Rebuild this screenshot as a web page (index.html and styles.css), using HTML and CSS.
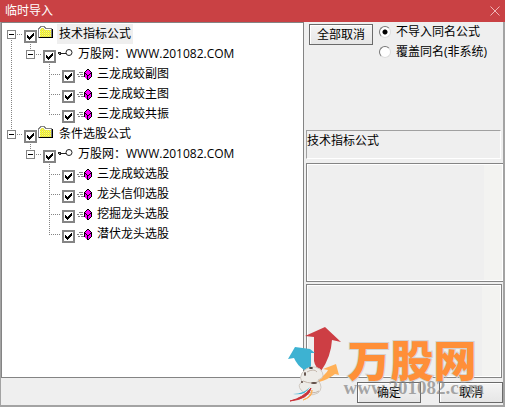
FILE: index.html
```html
<!DOCTYPE html>
<html lang="zh-CN">
<head>
<meta charset="utf-8">
<title>临时导入</title>
<link rel="stylesheet" href="styles.css">
</head>
<body>
<svg class="defs" width="0" height="0" aria-hidden="true">
  <defs>
    <pattern id="dither" width="2" height="2" patternUnits="userSpaceOnUse">
      <rect width="2" height="2" fill="#ffff00"/>
      <rect width="1" height="1" fill="#d0d0a0"/><rect x="1" y="1" width="1" height="1" fill="#e8e8a0"/>
    </pattern>
    <symbol id="folder" viewBox="0 0 20 20">
      <path d="M1 14V4h1V3h1V2h5v1h1v1h6v10z" fill="#848484"/>
      <path d="M2 14V5h1V4h1V3h3v1h1v1h6v9z" fill="#fff"/>
      <path d="M3 13V5h1V4h3v1h1v1h6v7z" fill="url(#dither)"/>
      <path d="M2 14h14V5h-1v8H2z" fill="#000"/>
    </symbol>
    <symbol id="key" viewBox="0 0 20 20">
      <path d="M2 8h3v1h6v1H5v1H3v-1H2z" fill="#222"/>
      <rect x="3" y="9" width="1" height="1" fill="#999"/>
      <circle cx="13" cy="8.500" r="3" fill="#fff" stroke="#222"/>
    </symbol>
    <symbol id="gem" viewBox="0 0 20 20">
      <path d="M4 8.500h4M2 10.500h2M5 10.500h3M3 12.500h2M6 12.500h3" stroke="#848484"/>
      <path d="M12 5h2v1h1v1h1v1h1v5h-1v1h-1v1h-1v1h-2v-1h-1v-1h-1v-1H9V8h1V7h1V6h1z" fill="#000"/>
      <path d="M12 6h2v1h1v1h1v1h-1v1h-1v1h-2v-1h-1V9h-1V8h1V7h1zM10 10h1v1h1v4h-1v-1h-1zM13 12h1v-1h1v-1h1v3h-1v1h-1v1h-1z" fill="#ff00ff"/>
    </symbol>
  </defs>
</svg>
<div class="window">
  <header class="titlebar">
    <h1>临时导入</h1>
    <button class="close" type="button" aria-label="关闭"><svg width="10" height="10" viewBox="0 0 10 10"><path d="M.5.5l9 9M9.500.5l-9 9" stroke="#efb6b7" fill="none"/></svg></button>
  </header>
  <main class="content">
    <ul class="tree">
      <li>
        <div class="row"><span class="elbow"><button class="toggle" type="button" aria-label="折叠"></button></span><input type="checkbox" id="a" checked><svg class="icon"><use href="#folder"/></svg><label class="selected" for="a">技术指标公式</label></div>
        <ul>
          <li>
            <div class="row"><span class="elbow"><button class="toggle" type="button" aria-label="折叠"></button></span><input type="checkbox" id="b" checked><svg class="icon"><use href="#key"/></svg><label for="b">万股网：WWW.201082.COM</label></div>
            <ul>
              <li><div class="row"><span class="elbow"></span><input type="checkbox" id="b1" checked><svg class="icon"><use href="#gem"/></svg><label for="b1">三龙成蛟副图</label></div></li>
              <li><div class="row"><span class="elbow"></span><input type="checkbox" id="b2" checked><svg class="icon"><use href="#gem"/></svg><label for="b2">三龙成蛟主图</label></div></li>
              <li><div class="row"><span class="elbow"></span><input type="checkbox" id="b3" checked><svg class="icon"><use href="#gem"/></svg><label for="b3">三龙成蛟共振</label></div></li>
            </ul>
          </li>
        </ul>
      </li>
      <li>
        <div class="row"><span class="elbow"><button class="toggle" type="button" aria-label="折叠"></button></span><input type="checkbox" id="c" checked><svg class="icon"><use href="#folder"/></svg><label for="c">条件选股公式</label></div>
        <ul>
          <li>
            <div class="row"><span class="elbow"><button class="toggle" type="button" aria-label="折叠"></button></span><input type="checkbox" id="d" checked><svg class="icon"><use href="#key"/></svg><label for="d">万股网：WWW.201082.COM</label></div>
            <ul>
              <li><div class="row"><span class="elbow"></span><input type="checkbox" id="d1" checked><svg class="icon"><use href="#gem"/></svg><label for="d1">三龙成蛟选股</label></div></li>
              <li><div class="row"><span class="elbow"></span><input type="checkbox" id="d2" checked><svg class="icon"><use href="#gem"/></svg><label for="d2">龙头信仰选股</label></div></li>
              <li><div class="row"><span class="elbow"></span><input type="checkbox" id="d3" checked><svg class="icon"><use href="#gem"/></svg><label for="d3">挖掘龙头选股</label></div></li>
              <li><div class="row"><span class="elbow"></span><input type="checkbox" id="d4" checked><svg class="icon"><use href="#gem"/></svg><label for="d4">潜伏龙头选股</label></div></li>
            </ul>
          </li>
        </ul>
      </li>
    </ul>
    <section class="side">
      <div class="options">
        <button class="btn" type="button">全部取消</button>
        <div class="radios">
          <label><input type="radio" name="mode" checked>不导入同名公式</label>
          <label><input type="radio" name="mode">覆盖同名(非系统)</label>
        </div>
      </div>
      <div class="caption">技术指标公式</div>
      <div class="pane wide"></div>
      <div class="pane"></div>
    </section>
  </main>
  <footer class="actions">
    <button class="btn" type="button">确定</button>
    <button class="btn" type="button">取消</button>
  </footer>
  <div class="watermark">
    <svg class="logo" width="60" height="76" viewBox="0 0 60 76" aria-hidden="true">
      <path d="M37 0L17 9l9 1v24q1 6 7 10Q43 30 44 13l9 2z" fill="#cb3339" opacity=".94"/>
      <path d="M7 20L0 32l6-1q3 7 10 12l7-3V26h4l-5-4z" fill="#3db2d2"/>
      <path d="M48 37l3 11-4-1q-6 5-16 8l-2-3q9-4 11-9l-5-1z" fill="#ffb057"/>
      <path d="M14 46q8-10 18-4 7 8-2 11 6 8 0 13-10 5-17-3-4-5 1-8-3-4 0-9z" fill="#eeece8" stroke="#d0c9c1"/>
      <path d="M19 45q7-4 10 0M15 54q9 4 17 0M18 63q6 5 13 1" fill="none" stroke="#c3b5a9"/>
      <ellipse cx="17" cy="47" rx="1" ry="2" fill="#5b4942"/><ellipse cx="23" cy="41" rx="2" ry="1" fill="#3c3634"/><circle cx="14" cy="55" r="1" fill="#5b4942"/><ellipse cx="26" cy="56" rx="3" ry="1" fill="#5b4942"/>
      <path d="M5 67q11 0 17-7-5 9-17 7z" fill="#3db2d2"/>
      <path d="M2 74q13-3 21-13-2 11-21 13z" fill="#cb3339" stroke="#cb3339"/>
      <path d="M15 73q8-3 9-10 1 7-9 10z" fill="#ffb057" stroke="#ffb057"/>
    </svg>
    <div class="brand"><strong>万股网</strong><span>www.201082.com</span></div>
  </div>
</div>
</body>
</html>
```
FILE: styles.css
```css
* { box-sizing: border-box; }

body {
  margin: 0;
  background: #efefef;
  color: #000;
  font: 12px/20px "Open Sans", "Noto Sans CJK SC", sans-serif;
}

button, input { margin: 0; padding: 0; font: inherit; color: inherit; }
ul { list-style: none; margin: 0; padding: 0; }
.defs { position: absolute; }

.window {
  position: relative;
  display: flex;
  flex-direction: column;
  min-height: 100vh;
  border-bottom: 2px solid #a3a3a3;
}

.titlebar {
  display: flex;
  align-items: center;
  justify-content: space-between;
  height: 22px;
  padding: 0 5px;
  background: #c94144;
  color: #fff;
}
.titlebar h1 { margin: 0; font-size: 12px; font-weight: 400; }
.close { display: flex; border: 0; background: none; }

.content {
  flex: 1;
  display: grid;
  grid-template-columns: 3fr minmax(199px, 1fr);
  border-left: 1px solid #a3a3a3;
  border-right: 2px solid #a3a3a3;
}

.tree {
  padding: 1px 0 0 3px;
  background: #fff;
  border: 1px solid #848484;
}
.tree ul { padding-left: 19px; }
.tree li {
  background: repeating-linear-gradient(#848484 0 1px, transparent 1px 2px) 6px 0 / 1px 100% no-repeat;
}
.tree li:last-child { background-size: 1px 10px; }
.tree > li:first-child { background-position: 6px 10px; }

.row { display: flex; height: 20px; }
.elbow {
  width: 19px;
  padding: 6px 0 0 2px;
  background: repeating-linear-gradient(90deg, #848484 0 1px, transparent 1px 2px) 6px 10px / 12px 1px no-repeat;
}
.toggle {
  display: block;
  width: 9px;
  height: 9px;
  border: 1px solid #848484;
  background: linear-gradient(#000, #000) center / 5px 1px no-repeat #fff;
}
.row input {
  appearance: none;
  width: 13px;
  height: 13px;
  margin-top: 6px;
  border: 2px solid #848484;
  background: #fff;
}
.row input:checked {
  background-image: url("data:image/svg+xml,%3Csvg xmlns='http://www.w3.org/2000/svg' viewBox='0 0 9 9'%3E%3Cpath d='M1 3h1v1h1v1h1V4h1V3h1V2h1V1h1v3H7v1H6v1H5v1H4v1H3V7H2V6H1z'/%3E%3C/svg%3E");
}
.icon { width: 20px; height: 20px; }
.row label { padding: 0 2px; white-space: nowrap; }
.row .selected { background: #efefef; }

.side {
  display: flex;
  flex-direction: column;
  gap: 4px;
  padding: 0 0 0 2px;
}
.options {
  display: flex;
  align-items: flex-start;
  gap: 6px;
  height: 104px;
  padding: 2px 0 0 3px;
}
.btn {
  width: 64px;
  height: 21px;
  border: 1px solid #6a6a6a;
  background: linear-gradient(#f4f4f4, #e6e6e6);
  box-shadow: inset 1px 1px #fff;
  line-height: 19px;
  white-space: nowrap;
}
.radios { margin-top: -2px; }
.radios label { display: flex; align-items: center; gap: 5px; white-space: nowrap; }
.radios input {
  appearance: none;
  width: 12px;
  height: 12px;
  border: 1px solid;
  border-color: #777 #ddd #ddd #777;
  border-radius: 50%;
  background: #fff;
}
.radios input:checked { background: radial-gradient(circle, #000 2px, #fff 3px); }

.caption {
  height: 29px;
  margin-right: 2px;
  border: 1px solid;
  border-color: #a0a0a0 #fff #fff #a0a0a0;
}
.pane {
  flex: 94 1 0;
  margin-right: 1px;
  margin-top: -2px;
  border: 1px solid #848484;
  box-shadow: inset 0 0 0 1px #fff;
  background: linear-gradient(#f3f3f1, #f3f3f1) right / 19px 100% no-repeat;
}
.pane.wide { flex-grow: 119; margin: 0; border-right: 0; }

.actions {
  display: flex;
  justify-content: flex-end;
  gap: 18px;
  height: 27px;
  padding: 4px 0 0;
  border: solid #a3a3a3;
  border-width: 0 2px 0 1px;
}

.watermark {
  position: absolute;
  right: 21px;
  bottom: 2px;
  display: flex;
  align-items: flex-end;
  pointer-events: none;
}
.logo { margin-right: -4px; }
.brand { display: flex; flex-direction: column; padding-bottom: 6px; }
.brand strong {
  padding-left: 4px;
  color: #ff8f38;
  font: 900 43px/46px "Noto Sans CJK SC", sans-serif;
  -webkit-text-stroke: 2px #d2d2d2;
  paint-order: stroke fill;
}
.brand span {
  margin-top: -2px;
  color: rgba(130, 130, 130, .7);
  font: bold 19px/18px "Liberation Serif", serif;
}
```
